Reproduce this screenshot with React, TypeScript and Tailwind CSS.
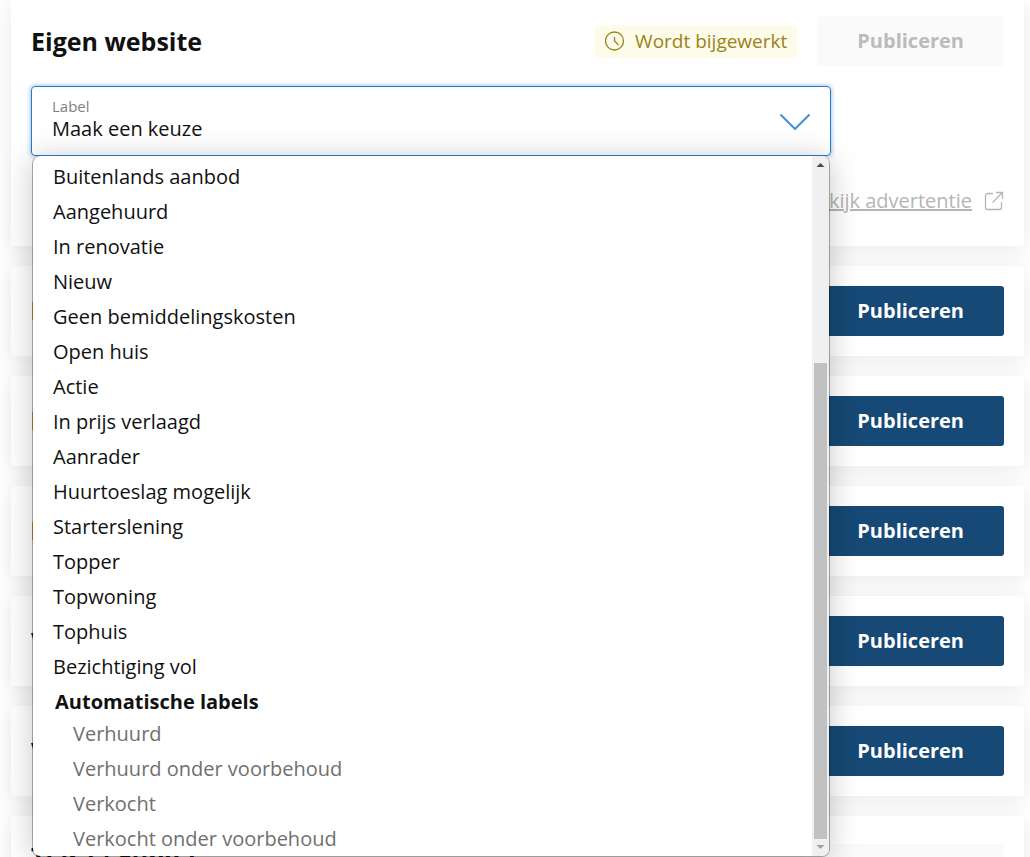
import type { ReactNode } from "react";

const labels = [
  "Buitenlands aanbod",
  "Aangehuurd",
  "In renovatie",
  "Nieuw",
  "Geen bemiddelingskosten",
  "Open huis",
  "Actie",
  "In prijs verlaagd",
  "Aanrader",
  "Huurtoeslag mogelijk",
  "Starterslening",
  "Topper",
  "Topwoning",
  "Tophuis",
  "Bezichtiging vol",
];

const automaticLabels = [
  "Verhuurd",
  "Verhuurd onder voorbehoud",
  "Verkocht",
  "Verkocht onder voorbehoud",
];

function PublishButton({ disabled = false }: { disabled?: boolean }) {
  return (
    <button
      type="button"
      disabled={disabled}
      className="h-[50px] rounded-[3px] bg-[#164975] px-10 font-bold text-white disabled:bg-[#fafafa] disabled:text-[#bbbbbb]"
    >
      Publiceren
    </button>
  );
}

function ChannelCard({ children }: { children: ReactNode }) {
  return (
    <section className="flex items-center justify-between rounded bg-white p-5 shadow-[0_4px_24px_rgba(20,20,60,0.09)]">
      {children}
      <PublishButton />
    </section>
  );
}

function ChannelLogo() {
  return (
    <svg className="h-[18px] w-4" viewBox="0 0 16 18" aria-hidden="true">
      <path d="M1 0h4v18H1z" fill="#f7a13c" />
    </svg>
  );
}

function StatusBadge() {
  return (
    <span className="flex h-[33px] items-center gap-2.5 rounded-[3px] bg-[#fdfbe9] px-2.5 text-[19px] text-[#9c821c]">
      <svg className="size-5" viewBox="0 0 20 20" fill="none" stroke="currentColor" strokeWidth="1.3" aria-hidden="true">
        <circle cx="9.5" cy="10" r="9" />
        <path d="M9.5 6v4l4 4" />
      </svg>
      Wordt bijgewerkt
    </span>
  );
}

function Scrollbar() {
  return (
    <div className="flex w-[17px] shrink-0 flex-col items-center bg-[#f0f0f0]">
      <svg className="h-[17px] w-[17px]" viewBox="0 0 17 17" aria-hidden="true">
        <path d="M4.500 11 8.500 7l4 4z" fill="#4a4a4a" />
      </svg>
      <div className="grow" />
      <div className="h-[68%] w-[13px] bg-[#c1c1c1]" />
      <svg className="h-[17px] w-[17px]" viewBox="0 0 17 17" aria-hidden="true">
        <path d="M4.500 6 8.500 10l4-4z" fill="#a0a0a0" />
      </svg>
    </div>
  );
}

function LabelMenu() {
  return (
    <div className="absolute inset-x-px top-full z-10 flex overflow-hidden rounded-lg border border-t-0 border-black/30 bg-white bg-clip-padding shadow-[0_2px_30px_rgba(0,0,0,0.22)]">
      <ul role="listbox" aria-label="Label" className="grow pt-[3px] leading-[35px]">
        {labels.map((label) => (
          <li key={label} role="option" aria-selected="false" className="px-5">
            {label}
          </li>
        ))}
        <li role="presentation" className="px-[22px] pt-1 font-bold leading-7">
          Automatische labels
        </li>
        {automaticLabels.map((label) => (
          <li key={label} role="option" aria-selected="false" aria-disabled="true" className="px-10 text-[#707070]">
            {label}
          </li>
        ))}
      </ul>
      <Scrollbar />
    </div>
  );
}

function LabelSelect() {
  return (
    <div className="relative h-[70px] w-full max-w-[800px]">
      <label htmlFor="label" className="absolute left-[21px] top-2.5 text-[15px] leading-5 text-[#808080]">
        Label
      </label>
      <select
        id="label"
        className="h-full w-full appearance-none rounded border border-[#2b7bc4] bg-transparent px-5 pb-0 pt-4 shadow-[0_0_5px_rgba(43,123,196,0.6)] outline-none"
      >
        <option>Maak een keuze</option>
      </select>
      <svg
        className="pointer-events-none absolute right-5 top-7 h-4 w-8"
        viewBox="0 0 32 16"
        fill="none"
        stroke="#3b8fdd"
        strokeWidth="2"
        aria-hidden="true"
      >
        <path d="m1.500 0.500 14.500 14.500 14.500-14.500" />
      </svg>
      <LabelMenu />
    </div>
  );
}

export default function App() {
  return (
    <main className="flex h-screen flex-col gap-5 overflow-hidden bg-white pl-[11px] pr-1.5 font-['Open_Sans',sans-serif] text-xl text-[#111111] *:shrink-0">
      <section className="relative z-10 rounded-b bg-white px-5 pb-5 pt-4 shadow-[0_4px_24px_rgba(20,20,60,0.09)]">
        <div className="mb-5 flex items-center gap-5">
          <h2 className="grow text-[25px] font-bold leading-8">Eigen website</h2>
          <StatusBadge />
          <PublishButton disabled />
        </div>
        <LabelSelect />
        <div className="mt-5 flex h-[50px] items-center justify-end gap-3 text-[#b5b5b5]">
          <a href="#advertentie" className="underline">
            Bekijk advertentie
          </a>
          <svg className="size-5" viewBox="0 0 20 20" fill="none" stroke="currentColor" strokeWidth="1.3" aria-hidden="true">
            <path d="M9 2.500H3.500a2 2 0 0 0-2 2v12a2 2 0 0 0 2 2h12a2 2 0 0 0 2-2V11M12 1.500h6.500V8M18.500 1.500 8.500 11.500" />
          </svg>
        </div>
      </section>

      <ChannelCard>
        <ChannelLogo />
      </ChannelCard>
      <ChannelCard>
        <ChannelLogo />
      </ChannelCard>
      <ChannelCard>
        <ChannelLogo />
      </ChannelCard>
      <ChannelCard>
        <h2 className="text-[25px] font-bold leading-8">V</h2>
      </ChannelCard>
      <ChannelCard>
        <h2 className="text-[25px] font-bold leading-8">V</h2>
      </ChannelCard>

      <section className="flex items-start justify-between rounded bg-white px-5 pt-6 shadow-[0_4px_24px_rgba(20,20,60,0.09)]">
        <h2 className="text-[25px] font-bold leading-8">Tiara / Funda</h2>
        <div className="py-1">
          <PublishButton disabled />
        </div>
      </section>
    </main>
  );
}
